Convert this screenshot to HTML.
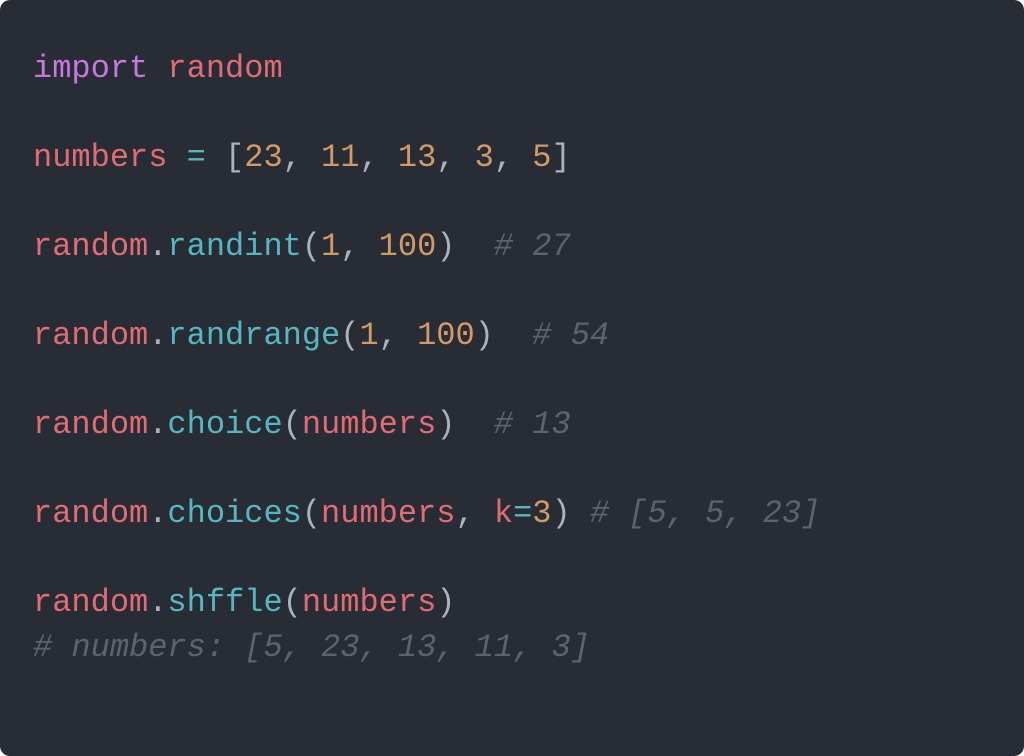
<!DOCTYPE html>
<html><head><style>
html,body{margin:0;padding:0;background:#fff;}
.box{position:absolute;left:0;top:0;width:1024px;height:756px;background:#282c34;border-radius:10px;}
pre{position:absolute;left:33px;top:47px;margin:0;font-family:"Liberation Mono",monospace;font-size:32px;line-height:44.5px;color:#abb2bf;}
.k{color:#c678dd}.r{color:#e06c75}.c{color:#56b6c2}.n{color:#d19a66}.m{color:#5c6370;font-style:italic}
</style></head><body><div class="box"><pre><span class="k">import</span> <span class="r">random</span>

<span class="r">numbers</span> <span class="c">=</span> [<span class="n">23</span>, <span class="n">11</span>, <span class="n">13</span>, <span class="n">3</span>, <span class="n">5</span>]

<span class="r">random</span>.<span class="c">randint</span>(<span class="n">1</span>, <span class="n">100</span>)  <span class="m"># 27</span>

<span class="r">random</span>.<span class="c">randrange</span>(<span class="n">1</span>, <span class="n">100</span>)  <span class="m"># 54</span>

<span class="r">random</span>.<span class="c">choice</span>(<span class="r">numbers</span>)  <span class="m"># 13</span>

<span class="r">random</span>.<span class="c">choices</span>(<span class="r">numbers</span>, <span class="r">k</span><span class="c">=</span><span class="n">3</span>) <span class="m"># [5, 5, 23]</span>

<span class="r">random</span>.<span class="c">shffle</span>(<span class="r">numbers</span>)
<span class="m"># numbers: [5, 23, 13, 11, 3]</span></pre></div></body></html>
